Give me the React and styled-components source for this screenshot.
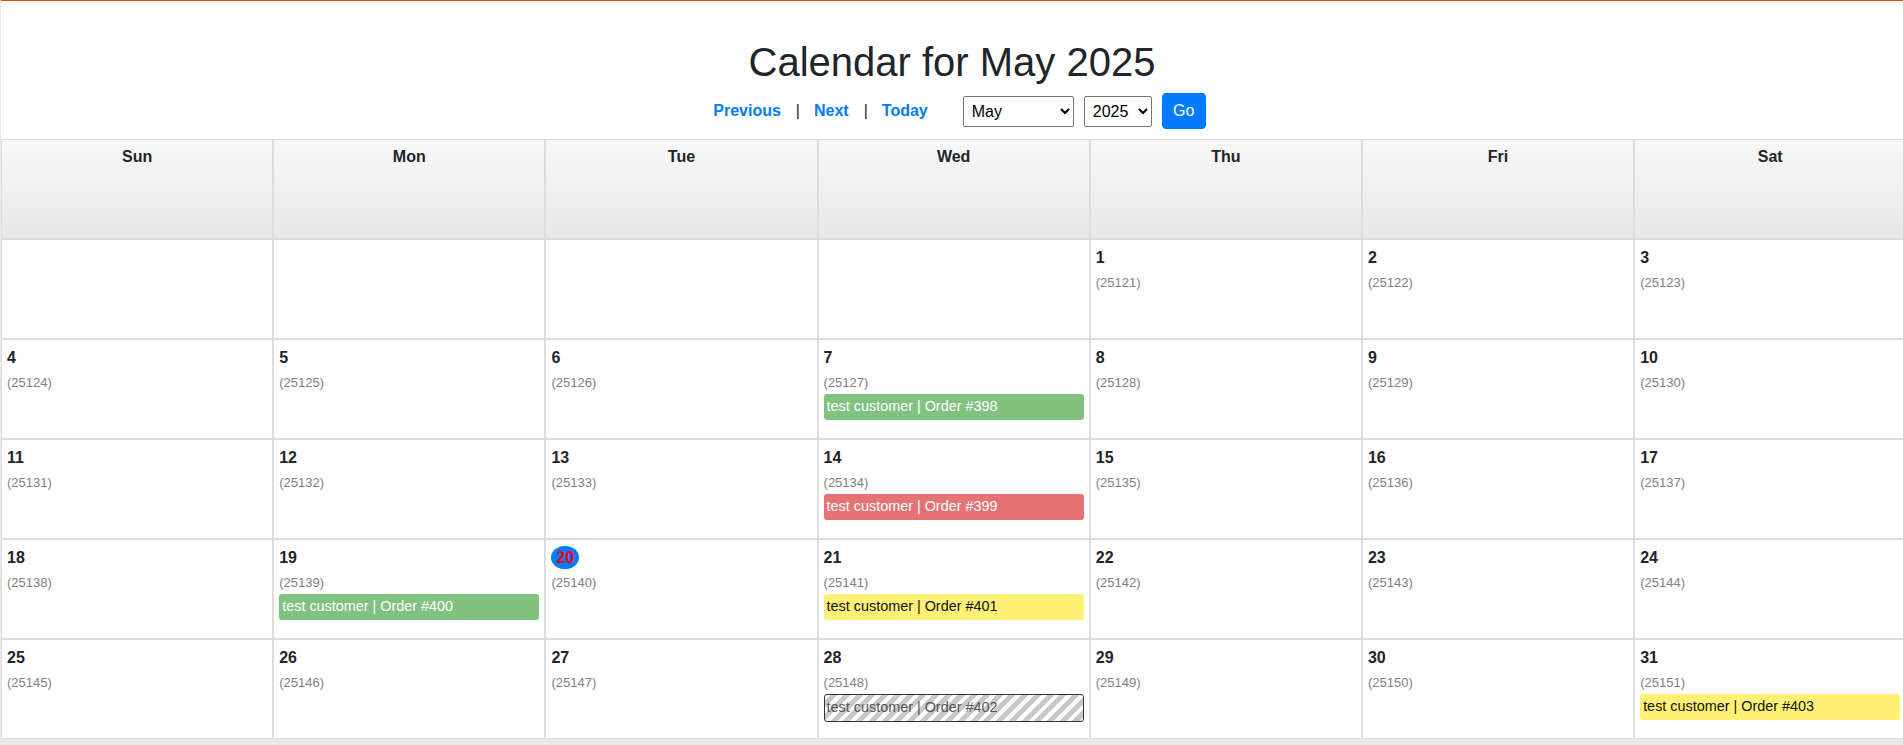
import React from "react";
import styled, { createGlobalStyle, css } from "styled-components";

const GlobalStyle = createGlobalStyle`
  html, body {
    margin: 0;
    padding: 0;
    background: #e9e9e9;
    font-family: "Liberation Sans", Arial, sans-serif;
    color: #212529;
  }
  * { box-sizing: border-box; }
`;

const MONTHS = [
  "January", "February", "March", "April", "May", "June",
  "July", "August", "September", "October", "November", "December",
];
const YEARS = [2020, 2021, 2022, 2023, 2024, 2025, 2026, 2027, 2028, 2029, 2030];
const WEEKDAYS = ["Sun", "Mon", "Tue", "Wed", "Thu", "Fri", "Sat"];

const events = {
  7: { kind: "green", label: "test customer | Order #398" },
  14: { kind: "red", label: "test customer | Order #399" },
  19: { kind: "green", label: "test customer | Order #400" },
  21: { kind: "yellow", label: "test customer | Order #401" },
  28: { kind: "striped", label: "test customer | Order #402" },
  31: { kind: "yellow", label: "test customer | Order #403" },
};

const TODAY = 20;
const FIRST_WEEKDAY = 4; // May 1 2025 is Thursday
const DAY_OF_YEAR_START = 121;

const App = () => {
  const cells = [];
  for (let i = 0; i < FIRST_WEEKDAY; i++) cells.push(null);
  for (let d = 1; d <= 31; d++) cells.push(d);

  return (
    <Page>
      <GlobalStyle />
      <Header>
        <Title>Calendar for May 2025</Title>
        <Nav>
          <NavLink href="#">Previous</NavLink>
          <Separator>|</Separator>
          <NavLink href="#">Next</NavLink>
          <Separator>|</Separator>
          <NavLink href="#">Today</NavLink>
          <Form onSubmit={(e) => e.preventDefault()}>
            <Select defaultValue="May" $width={111}>
              {MONTHS.map((m) => (
                <option key={m} value={m}>{m}</option>
              ))}
            </Select>
            <Select defaultValue="2025" $width={68}>
              {YEARS.map((y) => (
                <option key={y} value={y}>{y}</option>
              ))}
            </Select>
            <GoButton type="submit">Go</GoButton>
          </Form>
        </Nav>
      </Header>
      <Grid>
        {WEEKDAYS.map((w) => (
          <HeadCell key={w}>{w}</HeadCell>
        ))}
        {cells.map((d, i) => (
          <DayCell key={i}>
            {d && (
              <>
                <DayNumber>
                  {d === TODAY ? <TodayBadge>{d}</TodayBadge> : d}
                </DayNumber>
                <DayCode>(25{DAY_OF_YEAR_START + d - 1})</DayCode>
                {events[d] && (
                  <EventBar $kind={events[d].kind}>{events[d].label}</EventBar>
                )}
              </>
            )}
          </DayCell>
        ))}
      </Grid>
    </Page>
  );
};

const Page = styled.div`
  width: 100%;
  overflow: hidden;
  padding-left: 1px;
  padding-bottom: 6px;
`;

const Header = styled.div`
  background: #fff;
  border-top: 1px solid #e0480e;
  padding: 37px 0 10px;
  text-align: center;
`;

const Title = styled.h1`
  margin: 0 0 7px;
  font-size: 40px;
  font-weight: 400;
  line-height: 1.2;
  color: #212529;
`;

const Nav = styled.div`
  display: flex;
  align-items: center;
  justify-content: center;
  padding-left: 15px;
  height: 36px;
`;

const NavLink = styled.a`
  color: #007bff;
  font-weight: 700;
  font-size: 16px;
  text-decoration: none;
`;

const Separator = styled.span`
  margin: 0 14px 0 15px;
  font-size: 16px;
  color: #212529;
`;

const Form = styled.form`
  display: flex;
  align-items: center;
  gap: 9px;
  margin-left: 35px;
`;

const Select = styled.select`
  width: ${({ $width }) => $width}px;
  height: 31px;
  font-family: "Liberation Sans", Arial, sans-serif;
  font-size: 16px;
  color: #000;
  background: #fff;
  border: 1px solid #767676;
  border-radius: 2px;
  padding: 0 2px 0 4px;
  margin-right: 1px;
`;

const GoButton = styled.button`
  height: 36px;
  width: 44px;
  padding: 0;
  font-family: "Liberation Sans", Arial, sans-serif;
  font-size: 16px;
  color: #fff;
  background: #007bff;
  border: 1px solid #007bff;
  border-radius: 4px;
  cursor: pointer;
`;

const Grid = styled.div`
  display: grid;
  grid-template-columns: repeat(7, 272.2px);
  grid-auto-rows: 100px;
  background: #fff;
  width: max-content;
`;

const cellBase = css`
  border: 1px solid #ddd;
  padding: 5px;
  overflow: hidden;
`;

const HeadCell = styled.div`
  ${cellBase};
  background: linear-gradient(#f8f8f8, #e7e7e7);
  text-align: center;
  font-weight: 700;
  font-size: 16px;
  line-height: 24px;
  color: #212529;
`;

const DayCell = styled.div`
  ${cellBase};
  background: #fff;
`;

const DayNumber = styled.div`
  margin-top: 1px;
  height: 24px;
  font-weight: 700;
  font-size: 16px;
  line-height: 24px;
  color: #212529;
`;

const TodayBadge = styled.span`
  display: inline-block;
  vertical-align: top;
  padding: 0 5px;
  height: 23px;
  line-height: 23px;
  border-radius: 50%;
  background: #007bff;
  color: #f00;
`;

const DayCode = styled.div`
  margin-top: 4px;
  font-size: 13px;
  line-height: 18px;
  color: #808080;
`;

const barColors = {
  green: css`
    background: #81c281;
    color: #fff;
  `,
  red: css`
    background: #e57373;
    color: #fff;
  `,
  yellow: css`
    background: #fff176;
    color: #111;
  `,
  striped: css`
    background: repeating-linear-gradient(
      135deg,
      #fff 0,
      #fff 4px,
      #c8c8c8 4px,
      #c8c8c8 9px
    );
    color: #555;
    border: 1px solid #333;
    padding: 2px 2px;
  `,
};

const EventBar = styled.div`
  margin-top: 2px;
  padding: 2px 3px;
  border-radius: 3px;
  font-size: 14.4px;
  line-height: 21.6px;
  white-space: nowrap;
  overflow: hidden;
  ${({ $kind }) => barColors[$kind]};
`;

export default App;
